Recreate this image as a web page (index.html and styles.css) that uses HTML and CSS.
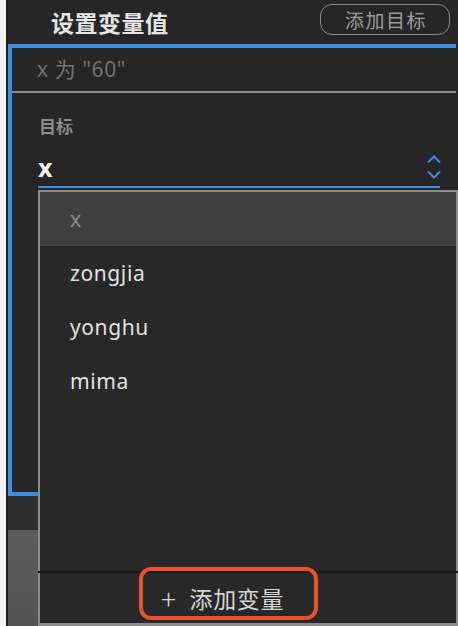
FILE: index.html
```html
<!DOCTYPE html>
<html lang="zh-CN">
<head>
<meta charset="utf-8">
<title>设置变量值</title>
<link rel="stylesheet" href="styles.css">
</head>
<body>
<div class="app">
  <div class="edge"></div>
  <div class="gutter"></div>
  <div class="main">
    <header class="header">
      <h1 class="title">设置变量值</h1>
      <button class="add-target">添加目标</button>
    </header>
    <section class="panel">
      <div class="summary">x 为 "60"</div>
      <div class="panel-body">
        <div class="label">目标</div>
        <div class="select">
          <span class="select-value">x</span>
          <svg class="chevrons" width="16" height="24" viewBox="0 0 16 24">
            <path d="M2 7.5 L8 1.5 L14 7.5" fill="none" stroke="#3a8ee4" stroke-width="2"/>
            <path d="M2 16.5 L8 22.5 L14 16.5" fill="none" stroke="#3a8ee4" stroke-width="2"/>
          </svg>
        </div>
      </div>
    </section>
    <div class="below">
      <div class="below-dark"></div>
      <div class="below-grey"></div>
    </div>
    <div class="dropdown">
      <ul class="options">
        <li class="option option-active">x</li>
        <li class="option">zongjia</li>
        <li class="option">yonghu</li>
        <li class="option">mima</li>
      </ul>
      <div class="dropdown-footer">
        <span class="add-var"><span class="plus">+</span>添加变量</span>
        <div class="annotation"></div>
      </div>
    </div>
  </div>
</div>
</body>
</html>
```
FILE: styles.css
```css
* { box-sizing: border-box; }
html, body { margin: 0; padding: 0; }
body {
  width: 458px;
  height: 626px;
  overflow: hidden;
  background: #262626;
  font-family: "Noto Sans", "Noto Sans CJK SC", sans-serif;
}
.app {
  display: flex;
  height: 626px;
}
.edge { width: 6px; background: #f2f2f2; flex: none; }
.gutter { width: 2px; background: #1e1e1e; flex: none; }
.main {
  flex: 1;
  position: relative;
  display: flex;
  flex-direction: column;
  background: #262626;
}
.header {
  height: 44px;
  display: flex;
  align-items: flex-start;
  justify-content: space-between;
  padding: 0 8px 0 43px;
}
.title {
  margin: 7px 0 0;
  font-family: "Noto Sans CJK SC", sans-serif;
  font-size: 23px;
  line-height: 30px;
  font-weight: 700;
  color: #e6e6e6;
  letter-spacing: 0.5px;
}
.add-target {
  margin-top: 4px;
  width: 130px;
  height: 31px;
  border: 1.5px solid #8a8a8a;
  border-radius: 12px;
  background: transparent;
  color: #9c9c9c;
  font-family: "Noto Sans CJK SC", sans-serif;
  font-size: 19px;
  line-height: 26px;
  padding: 0 0 0 2px;
  letter-spacing: 1.5px;
}
.panel {
  height: 452px;
  margin-right: 2px;
  border: 4px solid #3a8ee4;
  border-right: none;
  display: flex;
  flex-direction: column;
}
.summary {
  height: 45px;
  border-bottom: 2px solid #8a8a8a;
  padding: 6px 0 0 25px;
  font-size: 21px;
  line-height: 30px;
  letter-spacing: 0.6px;
  color: #727272;
}
.panel-body {
  padding: 21px 16px 0 26px;
}
.label {
  font-family: "Noto Sans CJK SC", sans-serif;
  font-size: 17px;
  line-height: 24px;
  font-weight: 700;
  color: #8c8c8c;
  padding-left: 1px;
}
.select {
  margin-top: 12px;
  height: 38px;
  border-bottom: 2px solid #3a8ee4;
  display: flex;
  align-items: center;
  justify-content: space-between;
}
.select-value {
  font-size: 25px;
  line-height: 30px;
  font-weight: 700;
  color: #f0f0f0;
  margin-top: -2px;
}
.chevrons { margin-right: -2px; margin-top: -2px; }
.below { flex: 1; display: flex; flex-direction: column; }
.below-dark { height: 34px; background: #2e2e2e; }
.below-grey { flex: 1; background: linear-gradient(#5c5c5c, #545454); }
.dropdown {
  position: absolute;
  top: 190px;
  left: 30px;
  right: 0;
  bottom: 0;
  border: 2px solid #8c8c8c;
  border-bottom-width: 3px;
  background: #282828;
  display: flex;
  flex-direction: column;
}
.options {
  list-style: none;
  margin: 0;
  padding: 0;
  flex: 1;
}
.option {
  height: 54px;
  display: flex;
  align-items: center;
  padding-left: 30px;
  font-size: 21px;
  letter-spacing: 0.6px;
  color: #e2e2e2;
}
.option-active {
  background: #404040;
  color: #8a8a8a;
}
.dropdown-footer {
  position: relative;
  height: 52px;
  border-top: 2px solid #1a1a1a;
  margin: 0 -2px;
  display: flex;
  align-items: center;
  padding-left: 123px;
}
.add-var {
  font-family: "Noto Sans CJK SC", sans-serif;
  font-size: 23px;
  line-height: 30px;
  color: #d4d4d4;
  letter-spacing: 0.6px;
  display: flex;
  align-items: center;
}
.plus { margin-right: 13px; font-size: 28px; font-weight: 300; }
.annotation {
  position: absolute;
  left: 101px;
  top: -6px;
  width: 179px;
  height: 53px;
  border: 4px solid #e8512a;
  border-radius: 12px;
}
```
